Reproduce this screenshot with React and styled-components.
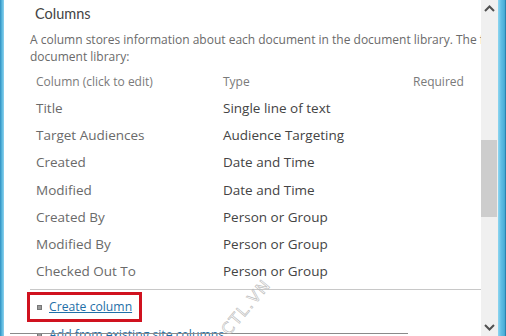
import React from "react";
import styled, { createGlobalStyle } from "styled-components";

const Global = createGlobalStyle`
  html, body { margin: 0; padding: 0; background: #fff; overflow: hidden; }
  body { font-family: "Open Sans", "Noto Sans", sans-serif; }
`;

const Frame = styled.div`
  position: relative;
  width: 506px;
  height: 336px;
  display: flex;
  overflow: hidden;
  background: #fff;
`;

const LeftEdge = styled.div`
  width: 4px;
  flex: none;
  background: linear-gradient(to right, #2f8fc0 0, #5ab8de 50%, #8fd2ee 100%);
`;

const Content = styled.div`
  flex: 1;
  min-width: 0;
  overflow: hidden;
  padding: 3px 0 0 26px;
`;

const Heading = styled.h2`
  margin: 0 0 0 5px;
  font-family: "Lato", "Open Sans", sans-serif;
  font-weight: 400;
  font-size: 14.5px;
  line-height: 22px;
  color: #444;
`;

const Description = styled.p`
  margin: 6px 0 0 0;
  width: 720px;
  font-size: 12px;
  line-height: 17px;
  color: #6a6a6a;
  white-space: nowrap;
`;

const Table = styled.div`
  margin: 7px 0 0 6px;
  display: grid;
  grid-template-columns: 187px 190px auto;
`;

const HeadCell = styled.div`
  font-size: 12px;
  line-height: 20px;
  color: #7a7a7a;
  padding-bottom: 3px;
`;

const NameCell = styled.div`
  font-size: 13.5px;
  line-height: 27.2px;
  color: #6a6a6a;
  white-space: nowrap;
`;

const TypeCell = styled(NameCell)`
  color: #444;
`;

const Rule = styled.div`
  margin: 4px 0 0 0;
  height: 1px;
  width: 470px;
  background: #c8c8c8;
`;

const Actions = styled.div`
  margin-top: 2px;
  display: flex;
  flex-direction: column;
  margin-left: -3px;
`;

const Highlight = styled.div`
  align-self: flex-start;
  border: 3px solid #d0121f;
  padding: 3px 7px;
`;

const ActionItem = styled.div`
  display: flex;
  align-items: center;
  gap: 7px;
  margin-left: ${(p) => p.$indent || 0}px;
  margin-top: ${(p) => p.$top || 0}px;
`;

const Bullet = styled.span`
  width: 5px;
  height: 5px;
  background: #9a9a9a;
  border: 1px solid #777;
  box-sizing: border-box;
  flex: none;
`;

const Link = styled.a`
  font-size: 12.2px;
  line-height: 18px;
  color: #1f6fa8;
  text-decoration: underline;
  cursor: pointer;
  white-space: nowrap;
`;

const Scrollbar = styled.div`
  width: 17px;
  flex: none;
  background: #f0f0f0;
  display: flex;
  flex-direction: column;
  align-items: center;
`;

const ArrowBox = styled.div`
  height: 17px;
  width: 17px;
  display: flex;
  align-items: center;
  justify-content: center;
  flex: none;
`;

const Track = styled.div`
  flex: 1;
  width: 17px;
  display: flex;
  flex-direction: column;
`;

const Thumb = styled.div`
  margin-top: 123px;
  height: 77px;
  width: 16px;
  background: #cdcdcd;
`;

const RightEdge = styled.div`
  width: 8px;
  flex: none;
  background: linear-gradient(to right, #8fd6f0 0, #5fbde4 40%, #4aaed8 80%, #1d6f9c 100%);
`;

const BottomLine = styled.div`
  position: absolute;
  left: 10px;
  top: 333px;
  width: 398px;
  height: 1px;
  background: #8a8a8a;
`;

const Watermark = styled.div`
  position: absolute;
  left: 246px;
  top: 307px;
  font-family: "DejaVu Sans", sans-serif;
  font-size: 16px;
  letter-spacing: 1.5px;
  white-space: nowrap;
  color: transparent;
  -webkit-text-stroke: 0.6px #b8b8b8;
  transform: translate(-50%, -50%) rotate(-50deg);
  pointer-events: none;
`;

const Chevron = ({ up }) => (
  <svg width="11" height="7" viewBox="0 0 11 7">
    <path
      d={up ? "M1 6 L5.5 1.5 L10 6" : "M1 1 L5.5 5.5 L10 1"}
      fill="none"
      stroke="#505050"
      strokeWidth="2"
    />
  </svg>
);

const rows = [
  ["Title", "Single line of text"],
  ["Target Audiences", "Audience Targeting"],
  ["Created", "Date and Time"],
  ["Modified", "Date and Time"],
  ["Created By", "Person or Group"],
  ["Modified By", "Person or Group"],
  ["Checked Out To", "Person or Group"],
];

export default function App() {
  return (
    <>
      <Global />
      <Frame>
        <LeftEdge />
        <Content>
          <Heading>Columns</Heading>
          <Description>
            A column stores information about each document in the document library. The
            following columns are currently available in this
            <br />
            document library:
          </Description>
          <Table>
            <HeadCell>Column (click to edit)</HeadCell>
            <HeadCell>Type</HeadCell>
            <HeadCell>Required</HeadCell>
            {rows.map(([n, t]) => (
              <React.Fragment key={n}>
                <NameCell>{n}</NameCell>
                <TypeCell>{t}</TypeCell>
                <NameCell />
              </React.Fragment>
            ))}
          </Table>
          <Rule />
          <Actions>
            <Highlight>
              <ActionItem>
                <Bullet />
                <Link>Create column</Link>
              </ActionItem>
            </Highlight>
            <ActionItem $indent={10} $top={4}>
              <Bullet />
              <Link>Add from existing site columns</Link>
            </ActionItem>
          </Actions>
        </Content>
        <Scrollbar>
          <ArrowBox>
            <Chevron up />
          </ArrowBox>
          <Track>
            <Thumb />
          </Track>
          <ArrowBox>
            <Chevron />
          </ArrowBox>
        </Scrollbar>
        <RightEdge />
        <BottomLine />
        <Watermark>CTL.VN</Watermark>
      </Frame>
    </>
  );
}
